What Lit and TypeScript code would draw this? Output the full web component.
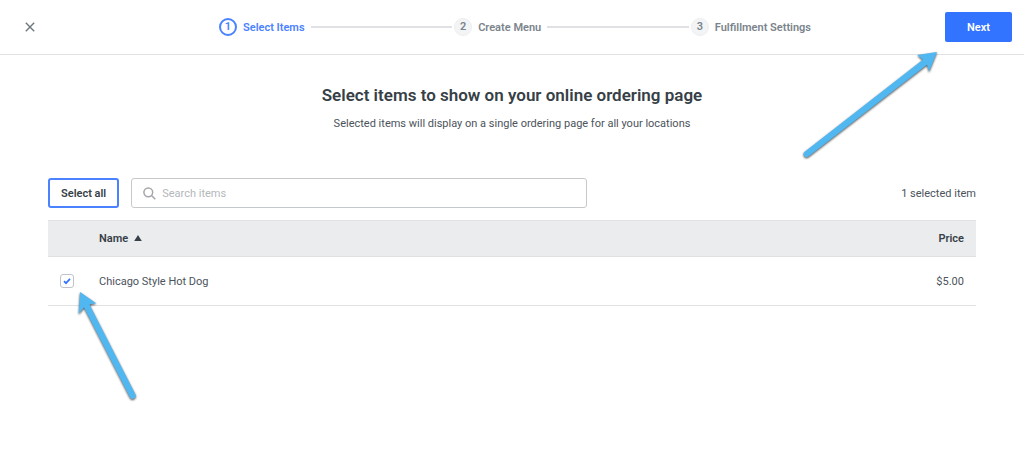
import { LitElement, html, css } from "lit";
import { customElement, state } from "lit/decorators.js";

interface Item {
  id: string;
  name: string;
  price: string;
}

@customElement("step-list")
class StepList extends LitElement {
  static styles = css`
    :host {
      display: block;
    }
    .steps {
      display: flex;
      align-items: center;
      margin: 0;
      padding: 0;
      list-style: none;
      font-size: 11px;
      line-height: 17px;
      font-weight: 600;
      color: #7b848c;
      white-space: nowrap;
    }
    .step {
      display: flex;
      align-items: center;
      gap: 6px;
    }
    .step.grow {
      flex: 1 1 auto;
    }
    .num {
      box-sizing: border-box;
      width: 18px;
      height: 18px;
      border: 1px solid #eceef0;
      border-radius: 50%;
      background: #f3f4f6;
      line-height: 16px;
      text-align: center;
    }
    .current {
      color: #4a82ff;
    }
    .current .num {
      border: 2px solid #4a82ff;
      background: #fff;
      line-height: 14px;
    }
    .line {
      flex: 1;
      height: 2px;
      margin-right: 2px;
      background: #dfe1e4;
    }
  `;

  private steps = ["Select Items", "Create Menu", "Fulfillment Settings"];

  render() {
    return html`<ol class="steps">
      ${this.steps.map(
        (label, i) => html`<li
          class="step ${i === 0 ? "current" : ""} ${i < this.steps.length - 1 ? "grow" : ""}"
        >
          <span class="num">${i + 1}</span>
          <span>${label}</span>
          ${i < this.steps.length - 1 ? html`<span class="line"></span>` : ""}
        </li>`
      )}
    </ol>`;
  }
}

@customElement("app-root")
class AppRoot extends LitElement {
  static styles = css`
    :host {
      display: block;
      position: relative;
      min-height: 100vh;
      overflow: hidden;
      background: #fff;
      color: #4b535b;
      font-family: Roboto, "Liberation Sans", sans-serif;
      font-size: 11px;
      line-height: 17px;
    }
    button,
    input {
      font: inherit;
      color: inherit;
    }
    button {
      cursor: pointer;
    }
    .top {
      display: grid;
      grid-template-columns: 1fr minmax(auto, 592px) 1fr;
      align-items: center;
      padding: 12px 12px 12px 18px;
      border-bottom: 1px solid #dfe1e3;
    }
    .close {
      justify-self: start;
      width: 24px;
      height: 24px;
      padding: 0;
      border: 0;
      background: none;
      display: grid;
      place-items: center;
    }
    .next {
      justify-self: end;
      height: 30px;
      padding: 0 22px;
      border: 0;
      border-radius: 2px;
      background: #3273ff;
      color: #fff;
      font-weight: 600;
    }
    .main {
      padding: 29px 48px;
    }
    .intro {
      text-align: center;
    }
    h1 {
      margin: 0;
      font-size: 17px;
      line-height: 22px;
      font-weight: 600;
      color: #373f47;
    }
    .intro p {
      margin: 9px 0 0;
    }
    .tools {
      display: flex;
      align-items: center;
      gap: 12px;
      margin-top: 46px;
    }
    .all {
      height: 30px;
      padding: 0 11px;
      border: 2px solid #4a82ff;
      border-radius: 3px;
      background: #fff;
      color: #373f47;
      font-weight: 600;
      white-space: nowrap;
    }
    .search {
      box-sizing: border-box;
      flex: 0 1 456px;
      height: 30px;
      display: flex;
      align-items: center;
      gap: 6px;
      padding: 0 11px;
      border: 1px solid #c6c9cc;
      border-radius: 3px;
    }
    .search input {
      flex: 1;
      min-width: 0;
      height: 18px;
      padding: 0;
      border: 0;
      outline: 0;
      background: none;
    }
    .search input::placeholder {
      color: #b4b7ba;
      opacity: 1;
    }
    .count {
      margin-left: auto;
      white-space: nowrap;
    }
    table {
      width: 100%;
      margin-top: 12px;
      border-collapse: collapse;
    }
    th,
    td {
      padding: 0 12px;
      border-bottom: 1px solid #dfe1e3;
      text-align: left;
    }
    th {
      height: 35px;
      border-top: 1px solid #dfe1e3;
      background: #ebecee;
      color: #373f47;
      font-weight: 600;
    }
    td {
      height: 48px;
    }
    .pick {
      width: 27px;
    }
    .name {
      padding-left: 0;
    }
    .price {
      text-align: right;
    }
    .sort {
      margin-left: 3px;
    }
    .box {
      appearance: none;
      display: block;
      box-sizing: border-box;
      width: 14px;
      height: 14px;
      margin: 0;
      border: 1px solid #c0c4c8;
      border-radius: 3px;
      background: #fff center / 12px 12px no-repeat;
    }
    .box:checked {
      background-image: url("data:image/svg+xml,%3Csvg xmlns='http://www.w3.org/2000/svg' viewBox='0 0 12 12'%3E%3Cpath d='M3 6.2l2 2 4-4.3' fill='none' stroke='%233273ff' stroke-width='1.7'/%3E%3C/svg%3E");
    }
    .arrow {
      position: absolute;
      pointer-events: none;
      fill: #51b7f0;
      filter: drop-shadow(0 1px 1px rgba(0, 0, 0, 0.7));
    }
    .to-next {
      top: 46px;
      right: 80px;
    }
    .to-box {
      top: 286px;
      left: 74px;
    }
  `;

  @state() private selected = new Set<string>(["hot-dog"]);

  private items: Item[] = [{ id: "hot-dog", name: "Chicago Style Hot Dog", price: "$5.00" }];

  private toggle(id: string) {
    const next = new Set(this.selected);
    if (!next.delete(id)) next.add(id);
    this.selected = next;
  }

  private selectAll() {
    this.selected = new Set(this.items.map((i) => i.id));
  }

  render() {
    const n = this.selected.size;
    return html`
      <header class="top">
        <button class="close" aria-label="Close">
          <svg width="10" height="10" viewBox="0 0 10 10" fill="none" stroke="#6f777e" stroke-width="1.4">
            <path d="M.8 .8l8.4 8.4M9.2 .8L.8 9.2" />
          </svg>
        </button>
        <step-list></step-list>
        <button class="next">Next</button>
      </header>
      <main class="main">
        <div class="intro">
          <h1>Select items to show on your online ordering page</h1>
          <p>Selected items will display on a single ordering page for all your locations</p>
        </div>
        <div class="tools">
          <button class="all" @click=${this.selectAll}>Select all</button>
          <label class="search">
            <svg width="13" height="13" viewBox="0 0 13 13" fill="none" stroke="#a3a7ab" stroke-width="1.5">
              <circle cx="5.3" cy="5.3" r="4.4" />
              <path d="M8.5 8.5l3.8 3.8" />
            </svg>
            <input type="text" placeholder="Search items" aria-label="Search items" />
          </label>
          <span class="count">${n} selected ${n === 1 ? "item" : "items"}</span>
        </div>
        <table>
          <thead>
            <tr>
              <th class="pick"></th>
              <th class="name">
                Name
                <svg class="sort" width="8" height="7" viewBox="0 0 8 7" fill="#373f47">
                  <path d="M4 0L7.8 6H.2z" />
                </svg>
              </th>
              <th class="price">Price</th>
            </tr>
          </thead>
          <tbody>
            ${this.items.map(
              (item) => html`<tr>
                <td class="pick">
                  <input
                    class="box"
                    type="checkbox"
                    id=${item.id}
                    .checked=${this.selected.has(item.id)}
                    @change=${() => this.toggle(item.id)}
                  />
                </td>
                <td class="name"><label for=${item.id}>${item.name}</label></td>
                <td class="price">${item.price}</td>
              </tr>`
            )}
          </tbody>
        </table>
      </main>
      <svg class="arrow to-next" width="144" height="118" viewBox="0 0 144 118">
        <path
          d="M137 6L117.3 9L122.8 13.8L4.4 106A3.1 3.1 0 0 0 8.2 110.8L127 18.8L129 25.7Z"
        />
      </svg>
      <svg class="arrow to-box" width="66" height="120" viewBox="0 0 66 120">
        <path d="M6 6L22.2 17.3L15.5 18.6L61.5 108.6A3.1 3.1 0 0 1 56 111.4L10 21.4L4.7 28Z" />
      </svg>
    `;
  }
}
